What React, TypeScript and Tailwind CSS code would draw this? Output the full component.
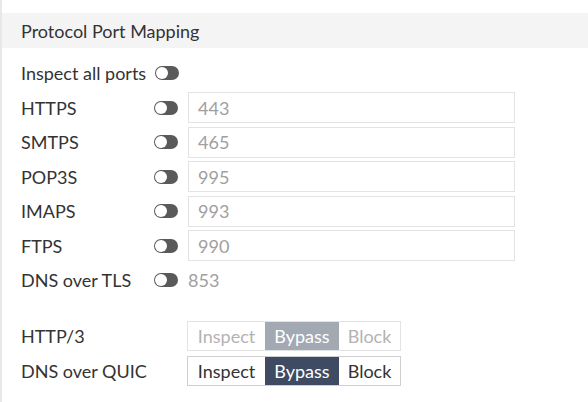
import React from "react";

function Toggle() {
  return (
    <div className="relative w-[24px] h-[14px] rounded-full bg-[#5a5a5a] shrink-0">
      <div className="absolute left-[1px] top-[1px] w-[12px] h-[12px] rounded-full bg-white" />
    </div>
  );
}

function PortRow({ label, value }: { label: string; value: string }) {
  return (
    <div className="flex items-center h-[31px] mt-[3.5px]">
      <div className="w-[133px] shrink-0">{label}</div>
      <Toggle />
      <div className="ml-[10px] w-[327px] h-[31px] border border-[#e3e3e3] flex items-center pl-[9px] text-[#a0a0a0]">
        {value}
      </div>
    </div>
  );
}

function Segmented({ disabled }: { disabled?: boolean }) {
  const border = disabled ? "border-[#e3e3e3]" : "border-[#cfcfcf]";
  const text = disabled ? "text-[#b3b3b3]" : "text-[#333]";
  const active = disabled ? "bg-[#a3a9b3]" : "bg-[#3f4b62]";
  return (
    <div className={`flex h-[30px] border ${border} w-[214px]`}>
      <div className={`w-[77px] flex items-center justify-center ${text}`}>Inspect</div>
      <div className={`w-[74px] flex items-center justify-center text-white ${active}`}>Bypass</div>
      <div className={`flex-1 flex items-center justify-center ${text}`}>Block</div>
    </div>
  );
}

export default function App() {
  return (
    <div
      className="w-[588px] h-[402px] bg-white border-l-2 border-[#e8e8e8] pt-[13px] text-[18px] leading-[22px] text-[#333] overflow-hidden"
      style={{ fontFamily: "Lato, 'Open Sans', sans-serif" }}
    >
      <div className="h-[35px] bg-[#f4f4f4] pl-[19px] flex items-center">Protocol Port Mapping</div>
      <div className="pl-[19px] pt-[6px]">
        <div className="flex items-center h-[31px] mt-[3.5px]">
          <div className="mr-[9px]">Inspect all ports</div>
          <Toggle />
        </div>
        <PortRow label="HTTPS" value="443" />
        <PortRow label="SMTPS" value="465" />
        <PortRow label="POP3S" value="995" />
        <PortRow label="IMAPS" value="993" />
        <PortRow label="FTPS" value="990" />
        <div className="flex items-center h-[31px] mt-[3.5px]">
          <div className="w-[133px] shrink-0">DNS over TLS</div>
          <Toggle />
          <div className="ml-[10px] text-[#a0a0a0]">853</div>
        </div>
        <div className="flex items-center mt-[25.5px]">
          <div className="w-[166px] shrink-0">HTTP/3</div>
          <Segmented disabled />
        </div>
        <div className="flex items-center mt-[5px]">
          <div className="w-[166px] shrink-0">DNS over QUIC</div>
          <Segmented />
        </div>
      </div>
    </div>
  );
}
